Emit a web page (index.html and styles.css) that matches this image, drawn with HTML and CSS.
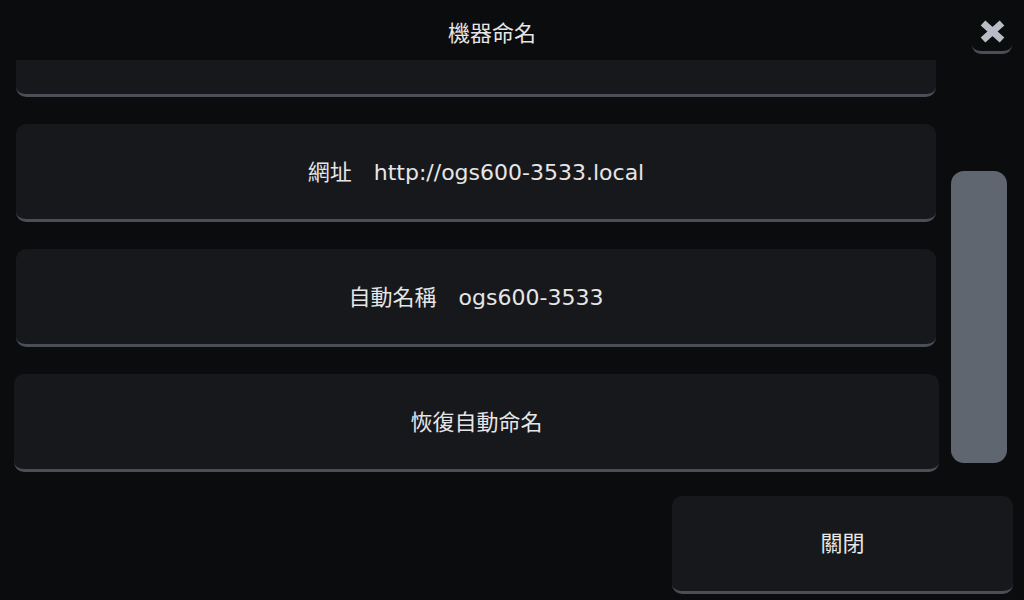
FILE: index.html
```html
<!DOCTYPE html>
<html lang="zh-Hant">
<head>
<meta charset="utf-8">
<title>機器命名</title>
<link rel="stylesheet" href="styles.css">
</head>
<body>
<div class="screen">
  <header class="header">
    <div class="title">機器命名</div>
    <button class="close-x" aria-label="關閉">
      <svg width="27" height="25" viewBox="0 0 27 25"><path d="M4 4 L23 21 M23 4 L4 21" stroke="#b9bdc5" stroke-width="7" fill="none"/></svg>
    </button>
  </header>
  <main class="main">
    <div class="list">
      <div class="card first"></div>
      <div class="card">網址　http://ogs600-3533.local</div>
      <div class="card">自動名稱　ogs600-3533</div>
      <div class="card active">恢復自動命名</div>
    </div>
    <div class="track"><div class="thumb"></div></div>
  </main>
  <footer class="footer">
    <div class="card close-btn">關閉</div>
  </footer>
</div>
</body>
</html>
```
FILE: styles.css
```css
html, body {
  margin: 0;
  padding: 0;
  background: #0b0c0e;
}
.screen {
  width: 1024px;
  height: 600px;
  overflow: hidden;
  display: flex;
  flex-direction: column;
  font-family: "DejaVu Sans", "Noto Sans CJK TC", sans-serif;
  color: #e6e6e6;
}
.header {
  height: 60px;
  flex: none;
  display: flex;
  align-items: flex-start;
  padding-right: 12px;
}
.title {
  flex: 1;
  text-align: center;
  padding-left: 12px;
  padding-top: 20px;
  font-size: 22px;
  line-height: 28px;
}
.close-x {
  margin-top: 12px;
  width: 40px;
  height: 42px;
  box-sizing: border-box;
  background: #0b0c0e;
  border: none;
  border-bottom: 3px solid #4a4e57;
  border-radius: 9px;
  padding: 0;
  display: flex;
  align-items: center;
  justify-content: center;
}
.main {
  height: 424px;
  flex: none;
  overflow: hidden;
  display: flex;
  padding-left: 16px;
  gap: 15px;
}
.list {
  width: 920px;
  flex: none;
  display: flex;
  flex-direction: column;
  gap: 27px;
  margin-top: -61px;
}
.card {
  height: 98px;
  box-sizing: border-box;
  background: #17181c;
  border-bottom: 3px solid #4a4e57;
  border-radius: 10px;
  display: flex;
  align-items: center;
  justify-content: center;
  font-size: 22px;
  flex: none;
  padding-bottom: 4px;
}
.card.active {
  margin: 0 -3px 0 -2px;
}
.track {
  width: 56px;
  flex: none;
}
.thumb {
  margin-top: 111px;
  height: 292px;
  background: #5f6670;
  border-radius: 13px;
}
.footer {
  flex: 1;
  display: flex;
  justify-content: flex-end;
  padding: 12px 11px 0 0;
}
.close-btn {
  width: 341px;
  padding-bottom: 6px;
}
```
